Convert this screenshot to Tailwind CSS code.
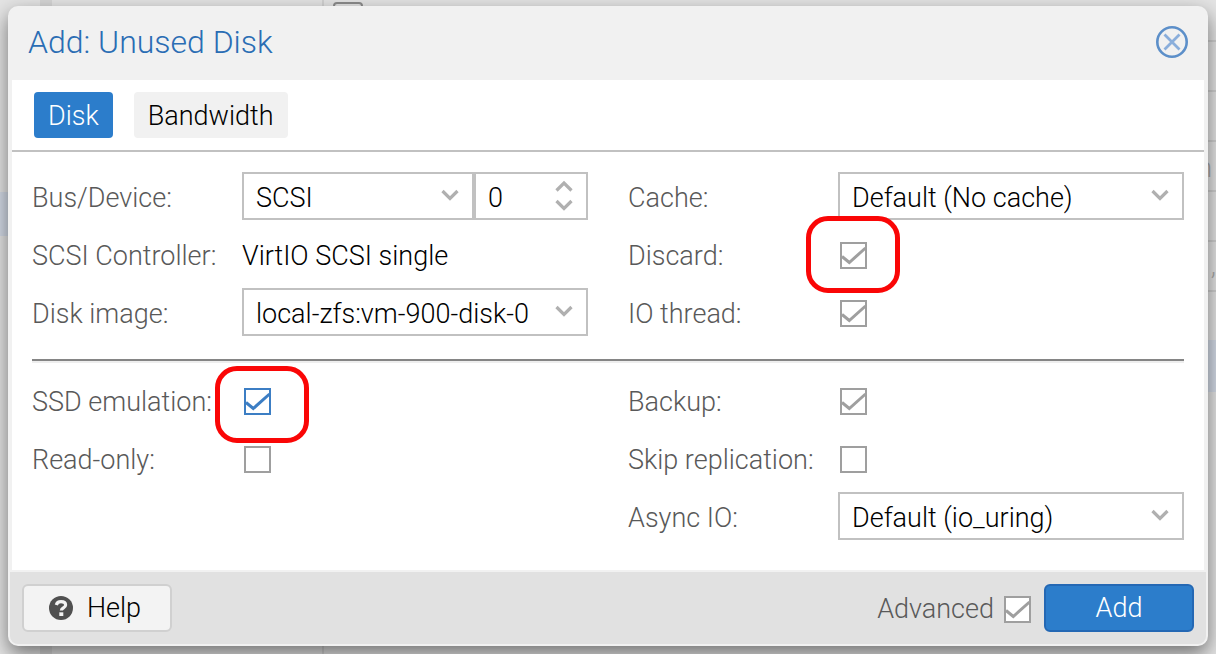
<!DOCTYPE html>
<html lang="en">
<head>
<meta charset="utf-8">
<meta name="viewport" content="width=device-width, initial-scale=1">
<title>Add: Unused Disk</title>
<script src="https://cdn.jsdelivr.net/npm/@tailwindcss/browser@4"></script>
</head>
<body class="relative min-h-screen overflow-hidden bg-[#e4e4e4] px-2 pt-[6px] pb-2 font-['Roboto','Liberation_Sans',sans-serif] text-[27px] leading-8 font-light text-black">

<svg width="0" height="0" class="absolute" aria-hidden="true">
  <defs>
    <symbol id="down" viewBox="0 0 20 14"><path d="M2.500 3 10 10.500 17.500 3" fill="none" stroke="#b0b0b0" stroke-width="3.200"/></symbol>
    <symbol id="up" viewBox="0 0 20 14"><path d="M2.500 10.500 10 3 17.500 10.500" fill="none" stroke="#b0b0b0" stroke-width="3.200"/></symbol>
    <symbol id="tick" viewBox="0 0 27 27"><path d="M2 14.500 9.300 20.500 25.500 6" fill="none" stroke="currentColor" stroke-width="3"/></symbol>
  </defs>
</svg>

<!-- Dimmed page behind the dialog -->
<div class="absolute inset-0 text-[#a9a9a9]" aria-hidden="true">
  <div class="absolute inset-y-0 left-10 w-3 bg-[#d6d6d6]"></div>
  <div class="absolute inset-y-0 left-[322px] w-[2px] bg-[#d2d2d2]"></div>
  <div class="absolute top-[2px] left-[333px] h-6 w-[30px] rounded-sm border-2 border-[#8c8c8c]"></div>
  <div class="absolute top-[192px] left-0 h-11 w-10 bg-[#d3dae6]"></div>
  <div class="absolute top-10 right-0 h-[252px] w-4 bg-[repeating-linear-gradient(to_bottom,#cfcfcf_0_2px,#e4e4e4_2px_50px)]"></div>
  <div class="absolute top-[340px] right-0 h-[52px] w-4 bg-[#d3dae6]"></div>
  <div class="absolute top-[152px] right-1">n</div>
  <div class="absolute top-[250px] right-0">,</div>
</div>

<form class="relative flex min-h-[640px] flex-col rounded-[10px] border-2 border-[#f1f1f1] bg-[#f1f1f1] shadow-[0_8px_20px_rgba(0,0,0,0.5)]" role="dialog" aria-labelledby="title">
  <header class="flex h-18 items-center justify-between pr-[18px] pb-1 pl-[18px]">
    <h1 id="title" class="text-[32px] text-[#2a6db4]">Add: Unused Disk</h1>
    <button type="button" aria-label="Close">
      <svg class="size-8" viewBox="0 0 32 32" fill="none"><circle cx="16" cy="16" r="14.700" stroke="#5c8fc9" stroke-width="2.600"/><path d="M8.500 8.500 23.500 23.500M23.500 8.500 8.500 23.500" stroke="#8aaedb" stroke-width="2.800"/></svg>
    </button>
  </header>

  <nav class="mx-[2px] flex h-18 items-center gap-[21px] border-b-2 border-[#c1c1c1] bg-white px-[22px]">
    <button type="button" class="h-[46px] rounded-sm bg-[#2c7dcb] px-[14px] pt-[2px] text-white">Disk</button>
    <button type="button" class="h-[46px] rounded-sm bg-[#f1f1f1] px-[14px] pt-[2px]">Bandwidth</button>
  </nav>

  <main class="mx-[2px] grow bg-white px-5 pt-5 pb-[30px] text-[#595959]">
    <div class="grid grid-cols-2 gap-x-10">
      <div class="flex flex-col gap-[10px]">
        <div class="flex h-12 items-center">
          <label for="bus" class="w-[210px] shrink-0 pt-[3px]">Bus/Device:</label>
          <div class="relative h-12 w-[232px] shrink-0">
            <select id="bus" class="size-full appearance-none border-2 border-[#c1c1c1] bg-white px-3 pt-[3px] text-black"><option>SCSI</option></select>
            <svg class="pointer-events-none absolute top-4 right-[14px] h-[14px] w-5"><use href="#down"/></svg>
          </div>
          <div class="relative h-12 min-w-0 grow">
            <input aria-label="Device number" value="0" class="size-full border-2 border-[#c1c1c1] bg-white px-3 pt-[3px] text-black">
            <button type="button" aria-label="Increase" class="absolute top-2 right-[14px]"><svg class="h-[14px] w-5"><use href="#up"/></svg></button>
            <button type="button" aria-label="Decrease" class="absolute right-[14px] bottom-2"><svg class="h-[14px] w-5"><use href="#down"/></svg></button>
          </div>
        </div>
        <div class="flex h-12 items-center">
          <span class="w-[210px] shrink-0 pt-[3px]">SCSI Controller:</span>
          <span class="pt-[3px] text-black">VirtIO SCSI single</span>
        </div>
        <div class="flex h-12 items-center">
          <label for="image" class="w-[210px] shrink-0 pt-[3px]">Disk image:</label>
          <div class="relative h-12 grow">
            <select id="image" class="size-full appearance-none border-2 border-[#c1c1c1] bg-white px-3 pt-[3px] text-black"><option>local-zfs:vm-900-disk-0</option></select>
            <svg class="pointer-events-none absolute top-4 right-[14px] h-[14px] w-5"><use href="#down"/></svg>
          </div>
        </div>
      </div>
      <div class="flex flex-col gap-[10px]">
        <div class="flex h-12 items-center">
          <label for="cache" class="w-[210px] shrink-0 pt-[3px]">Cache:</label>
          <div class="relative h-12 grow">
            <select id="cache" class="size-full appearance-none border-2 border-[#c1c1c1] bg-white px-3 pt-[3px] text-black"><option>Default (No cache)</option></select>
            <svg class="pointer-events-none absolute top-4 right-[14px] h-[14px] w-5"><use href="#down"/></svg>
          </div>
        </div>
        <div class="flex h-12 items-center">
          <label for="discard" class="w-[210px] shrink-0 pt-[3px]">Discard:</label>
          <div class="relative mt-[2px] ml-[2px] size-[27px] text-[#9f9f9f]">
            <input id="discard" type="checkbox" checked class="peer block size-[27px] appearance-none border-2 border-current bg-white">
            <svg class="pointer-events-none absolute inset-0 hidden size-[27px] peer-checked:block"><use href="#tick"/></svg>
            <div class="pointer-events-none absolute -top-[26px] -left-[34px] h-[77px] w-[94px] rounded-[22px] border-[5px] border-[#fa0606]"></div>
          </div>
        </div>
        <div class="flex h-12 items-center">
          <label for="thread" class="w-[210px] shrink-0 pt-[3px]">IO thread:</label>
          <div class="relative mt-[2px] ml-[2px] size-[27px] text-[#9f9f9f]">
            <input id="thread" type="checkbox" checked class="peer block size-[27px] appearance-none border-2 border-current bg-white">
            <svg class="pointer-events-none absolute inset-0 hidden size-[27px] peer-checked:block"><use href="#tick"/></svg>
          </div>
        </div>
      </div>
    </div>

    <hr class="mt-[23px] mb-[13px] h-1 border-t-2 border-b-2 border-t-[#858585] border-b-[#eeeeee]">

    <div class="grid grid-cols-2 gap-x-10">
      <div class="flex flex-col gap-[10px]">
        <div class="flex h-12 items-center">
          <label for="ssd" class="w-[210px] shrink-0 pt-[3px]">SSD emulation:</label>
          <div class="relative mt-[2px] ml-[2px] size-[27px] text-[#3c7ec4]">
            <input id="ssd" type="checkbox" checked class="peer block size-[27px] appearance-none border-2 border-current bg-white">
            <svg class="pointer-events-none absolute inset-0 hidden size-[27px] peer-checked:block"><use href="#tick"/></svg>
            <div class="pointer-events-none absolute -top-[22px] -left-[29px] h-[77px] w-[94px] rounded-[22px] border-[5px] border-[#fa0606]"></div>
          </div>
        </div>
        <div class="flex h-12 items-center">
          <label for="readonly" class="w-[210px] shrink-0 pt-[3px]">Read-only:</label>
          <input id="readonly" type="checkbox" class="mt-[2px] ml-[2px] block size-[27px] appearance-none border-2 border-[#9f9f9f] bg-white">
        </div>
      </div>
      <div class="flex flex-col gap-[10px]">
        <div class="flex h-12 items-center">
          <label for="backup" class="w-[210px] shrink-0 pt-[3px]">Backup:</label>
          <div class="relative mt-[2px] ml-[2px] size-[27px] text-[#9f9f9f]">
            <input id="backup" type="checkbox" checked class="peer block size-[27px] appearance-none border-2 border-current bg-white">
            <svg class="pointer-events-none absolute inset-0 hidden size-[27px] peer-checked:block"><use href="#tick"/></svg>
          </div>
        </div>
        <div class="flex h-12 items-center">
          <label for="skip" class="w-[210px] shrink-0 pt-[3px]">Skip replication:</label>
          <input id="skip" type="checkbox" class="mt-[2px] ml-[2px] block size-[27px] appearance-none border-2 border-[#9f9f9f] bg-white">
        </div>
        <div class="flex h-12 items-center">
          <label for="async" class="w-[210px] shrink-0 pt-[3px]">Async IO:</label>
          <div class="relative h-12 grow">
            <select id="async" class="size-full appearance-none border-2 border-[#c1c1c1] bg-white px-3 pt-[3px] text-black"><option>Default (io_uring)</option></select>
            <svg class="pointer-events-none absolute top-4 right-[14px] h-[14px] w-5"><use href="#down"/></svg>
          </div>
        </div>
      </div>
    </div>
  </main>

  <footer class="mt-[2px] flex h-18 items-center rounded-b-lg bg-[#e1e1e1] px-3">
    <button type="button" class="flex h-12 w-[150px] items-center justify-center gap-[14px] rounded-md border-2 border-[#d0d0d0] bg-[#f3f3f3] pr-1">
      <svg class="size-6" viewBox="0 0 24 24"><circle cx="12" cy="12" r="12" fill="#505050"/><path d="M7.300 9C7.900 6.800 9.500 5.700 12 5.700c2.700 0 4.600 1.300 4.600 3.400 0 2.900-4.200 2.700-4.200 5.400" fill="none" stroke="#f3f3f3" stroke-width="3.200"/><path d="M10.300 16.300h4v3.700h-4z" fill="#f3f3f3"/></svg>
      Help
    </button>
    <label for="advanced" class="mr-[10px] ml-auto pt-[2px] text-[#595959]">Advanced</label>
    <div class="relative mt-[2px] mr-[13px] size-[27px] text-[#9f9f9f]">
      <input id="advanced" type="checkbox" checked class="peer block size-[27px] appearance-none border-2 border-current bg-white">
      <svg class="pointer-events-none absolute inset-0 hidden size-[27px] peer-checked:block"><use href="#tick"/></svg>
    </div>
    <button type="submit" class="h-12 w-[150px] rounded-md border-2 border-[#2468b4] bg-[#2c7dcb] text-white">Add</button>
  </footer>
</form>
</body>
</html>
